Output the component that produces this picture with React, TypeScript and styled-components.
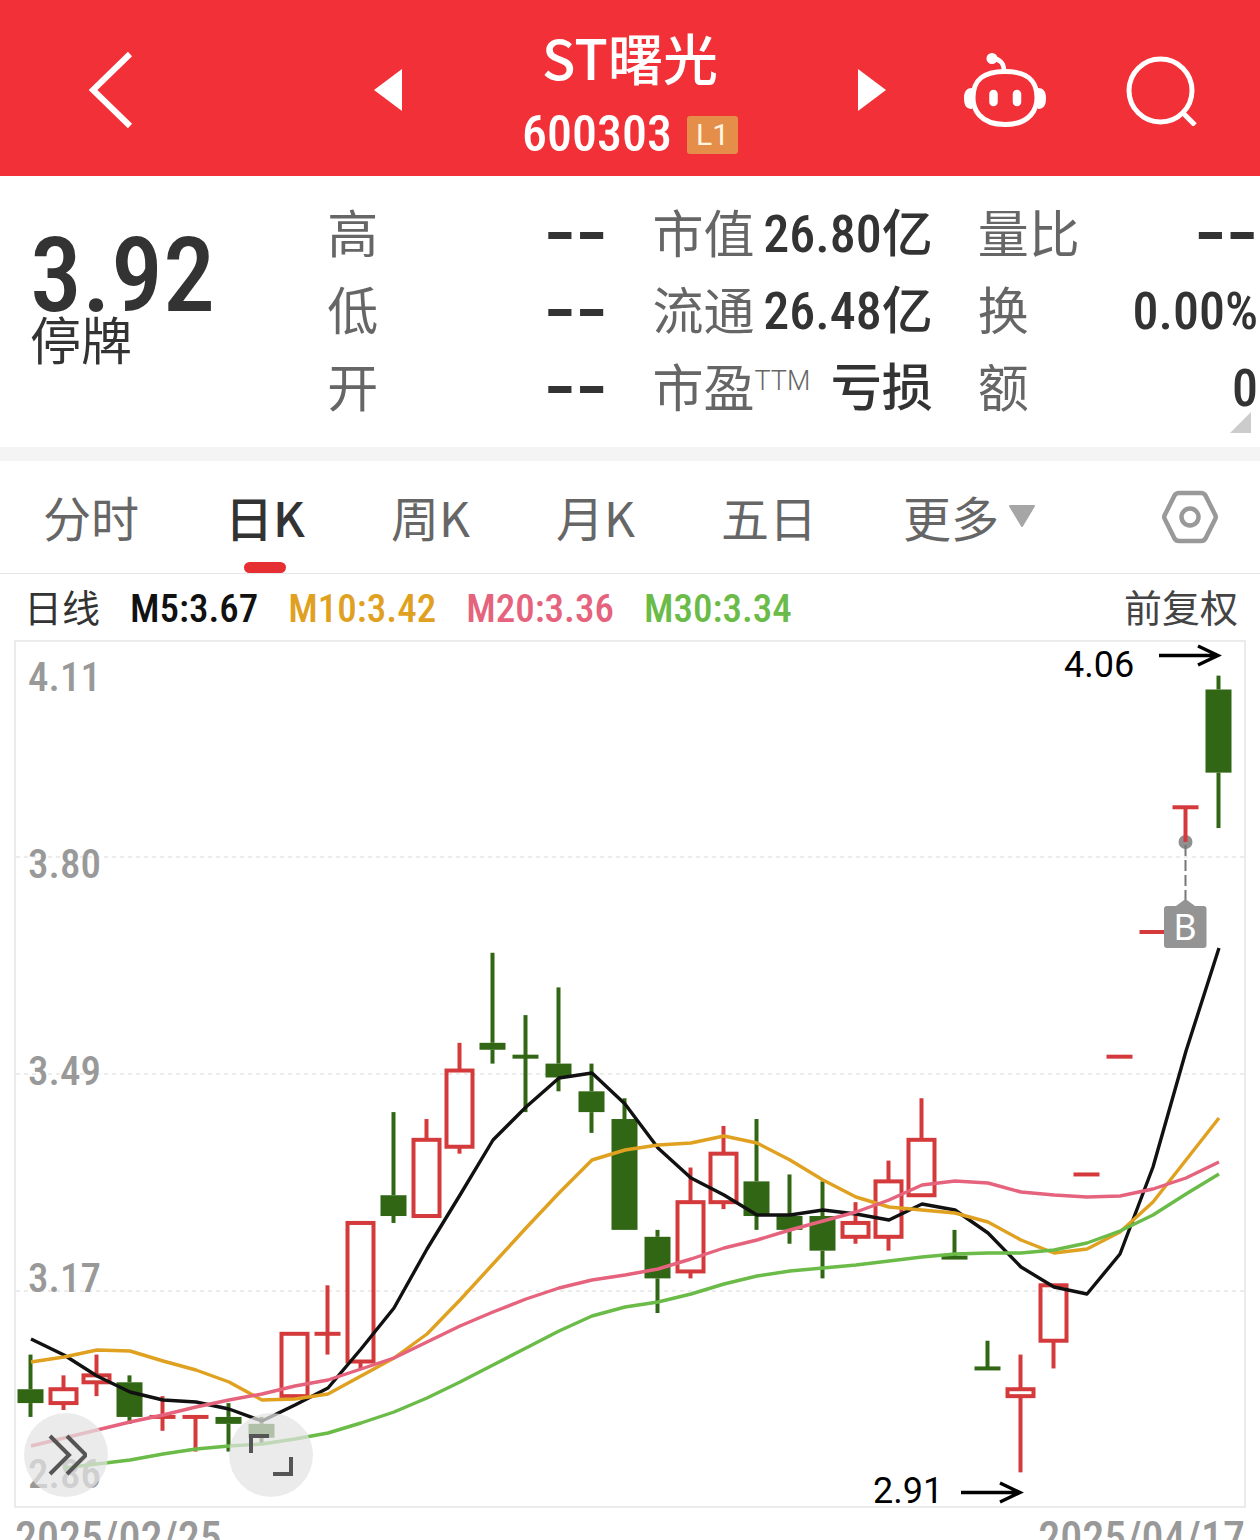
import React from "react";
import styled, { createGlobalStyle } from "styled-components";

const sans = `Roboto, "Noto Sans CJK SC", sans-serif`;
const digits = `"Roboto Condensed", Roboto, "Noto Sans CJK SC", sans-serif`;

const GlobalStyle = createGlobalStyle`
  *, *::before, *::after { box-sizing: border-box; }
  body {
    margin: 0;
    background: #fff;
    color: #333;
    font-family: ${sans};
  }
  button {
    margin: 0;
    padding: 0;
    border: 0;
    background: none;
    color: inherit;
    font: inherit;
    cursor: pointer;
  }
  svg { display: block; }
`;

const Screen = styled.main`
  height: 100vh;
  overflow: hidden;
`;

/* ---------- header ---------- */

const Header = styled.header`
  display: grid;
  grid-template-columns: minmax(0, 1fr) minmax(0, 512px) minmax(0, 1fr);
  align-items: center;
  height: 176px;
  padding-top: 4px;
  background: #f13037;
  color: #fff;
`;

const HeaderSide = styled.div<{ $end?: boolean }>`
  display: flex;
  align-items: center;
  justify-content: ${(p) => (p.$end ? "flex-end" : "flex-start")};
  gap: 80px;
  padding: ${(p) => (p.$end ? "0 62px 0 0" : "0 0 0 88px")};
`;

const Switcher = styled.div`
  display: flex;
  align-items: center;
  justify-content: space-between;
`;

const TitleBlock = styled.div`
  display: flex;
  flex-direction: column;
  align-items: center;
  padding-top: 16px;
`;

const StockName = styled.h1`
  margin: 0;
  font-family: "Noto Sans CJK SC", sans-serif;
  font-size: 55px;
  font-weight: 500;
  line-height: 73px;
`;

const CodeLine = styled.div`
  display: flex;
  align-items: center;
  gap: 15px;
  font-family: ${digits};
  font-size: 50px;
  font-weight: 500;
  line-height: 83px;
`;

const Level = styled.span`
  padding: 0 9px;
  border-radius: 3px;
  background: #e48e4a;
  color: #fff6e0;
  font-family: ${sans};
  font-size: 30px;
  font-weight: 400;
  line-height: 38px;
`;

/* ---------- quote ---------- */

const Quote = styled.section`
  position: relative;
  display: grid;
  grid-template-columns: minmax(0, 9fr) repeat(3, minmax(0, 10fr));
  column-gap: 45px;
  padding: 21px 2px 19px 30px;
  border-bottom: 14px solid #f4f4f4;
`;

const PriceBlock = styled.div`
  display: flex;
  flex-direction: column;
  padding-top: 37px;
`;

const Price = styled.strong`
  font-family: ${digits};
  font-size: 104px;
  font-weight: 500;
  line-height: 84px;
`;

const Status = styled.span`
  font-size: 51px;
  line-height: 50px;
`;

const Facts = styled.dl`
  margin: 0;
`;

const Fact = styled.div`
  display: flex;
  justify-content: space-between;
  height: 77px;
  line-height: 77px;
  font-size: 51px;
  white-space: nowrap;
`;

const FactName = styled.dt`
  display: flex;
  color: #666;
`;

const Ttm = styled.small`
  font-size: 27px;
  font-weight: 300;
  line-height: 60px;
`;

const FactValue = styled.dd<{ $empty?: boolean }>`
  margin: 0;
  font-family: ${(p) => (p.$empty ? `"DejaVu Sans", sans-serif` : digits)};
  font-size: ${(p) => (p.$empty ? "88px" : "52px")};
  font-weight: ${(p) => (p.$empty ? 400 : 500)};
  line-height: ${(p) => (p.$empty ? "64px" : "76px")};
`;

const Unit = styled.span`
  font-family: ${sans};
  font-size: 51px;
`;

const ExpandCorner = styled.button`
  position: absolute;
  right: 9px;
  bottom: 14px;
`;

/* ---------- tabs ---------- */

const Tabs = styled.nav`
  display: flex;
  align-items: stretch;
  gap: 86px;
  height: 113px;
  padding: 0 42px 0 43px;
  border-bottom: 1px solid #e6e6e6;
`;

const Tab = styled.button<{ $active?: boolean }>`
  position: relative;
  display: flex;
  align-items: center;
  gap: 10px;
  padding-bottom: 3px;
  color: ${(p) => (p.$active ? "#333" : "#666")};
  font-family: "Noto Sans CJK SC", sans-serif;
  font-size: 48px;
  font-weight: ${(p) => (p.$active ? 500 : 400)};
  white-space: nowrap;

  &::after {
    content: "";
    display: ${(p) => (p.$active ? "block" : "none")};
    position: absolute;
    bottom: 0;
    left: 50%;
    width: 42px;
    height: 11px;
    margin-left: -21px;
    border-radius: 6px;
    background: #e52f33;
  }
`;

const Settings = styled.button`
  margin-left: auto;
`;

/* ---------- chart ---------- */

const Legend = styled.div`
  display: flex;
  align-items: center;
  gap: 30px;
  height: 66px;
  padding: 4px 22px 0 24px;
  font-size: 38px;
  line-height: 50px;
`;

const Average = styled.span<{ $color: string }>`
  color: ${(p) => p.$color};
  font-family: ${digits};
  font-size: 39px;
  font-weight: 500;
`;

const Adjust = styled.button`
  margin-left: auto;
  color: #444;
`;

const ChartBox = styled.div`
  position: relative;
`;

const ChartSvg = styled.svg`
  width: 100%;
  height: auto;
`;

const AxisText = styled.text`
  fill: #999;
  font-family: ${digits};
  font-size: 41px;
  font-weight: 500;
`;

const PeakText = styled.text`
  fill: #000;
  font-family: ${sans};
  font-size: 36px;
`;

const MarkerText = styled.text`
  fill: #fff;
  font-family: "Noto Sans", sans-serif;
  font-size: 36px;
  text-anchor: middle;
`;

const RoundButton = styled.button<{ $left: number }>`
  position: absolute;
  left: ${(p) => p.$left}px;
  bottom: 11px;
  display: grid;
  place-items: center;
  width: 84px;
  height: 84px;
  border-radius: 50%;
  background: rgba(227, 227, 227, 0.72);
`;

const Dates = styled.div`
  display: flex;
  justify-content: space-between;
  padding: 0 15px;
  color: #999;
  font-family: ${digits};
  font-size: 44px;
  font-weight: 500;
  line-height: 60px;
`;

type Candle = [high: number, open: number, close: number, low: number];

const RED = "#d43a3b";
const GREEN = "#306614";

const candles: Candle[] = [
  [3.08, 3.03, 3.01, 2.99],
  [3.05, 3.01, 3.03, 3.0],
  [3.08, 3.04, 3.05, 3.02],
  [3.05, 3.04, 2.99, 2.98],
  [3.02, 2.99, 2.99, 2.97],
  [2.99, 2.99, 2.99, 2.94],
  [3.01, 2.99, 2.98, 2.94],
  [2.99, 2.98, 2.96, 2.95],
  [3.11, 3.02, 3.11, 3.02],
  [3.18, 3.11, 3.11, 3.08],
  [3.27, 3.07, 3.27, 3.06],
  [3.43, 3.31, 3.28, 3.27],
  [3.42, 3.28, 3.39, 3.28],
  [3.53, 3.38, 3.49, 3.37],
  [3.66, 3.53, 3.52, 3.5],
  [3.57, 3.51, 3.51, 3.43],
  [3.61, 3.5, 3.48, 3.46],
  [3.5, 3.46, 3.43, 3.4],
  [3.45, 3.42, 3.26, 3.26],
  [3.26, 3.25, 3.19, 3.14],
  [3.35, 3.2, 3.3, 3.19],
  [3.41, 3.3, 3.37, 3.29],
  [3.42, 3.33, 3.28, 3.26],
  [3.34, 3.28, 3.26, 3.24],
  [3.33, 3.28, 3.23, 3.19],
  [3.3, 3.25, 3.27, 3.24],
  [3.36, 3.25, 3.33, 3.23],
  [3.45, 3.31, 3.39, 3.31],
  [3.26, 3.22, 3.22, 3.22],
  [3.1, 3.06, 3.06, 3.06],
  [3.08, 3.02, 3.03, 2.91],
  [3.18, 3.1, 3.18, 3.06],
  [3.34, 3.34, 3.34, 3.34],
  [3.51, 3.51, 3.51, 3.51],
  [3.69, 3.69, 3.69, 3.69],
  [3.87, 3.87, 3.87, 3.82],
  [4.06, 4.04, 3.92, 3.84],
];

const averages = [
  {
    label: "M5:3.67",
    color: "#111111",
    first: 0,
    ys: [1339, 1355, 1376, 1392, 1400, 1402, 1409, 1421, 1405, 1388, 1349, 1308, 1249, 1195, 1140, 1107, 1078, 1073, 1104, 1148, 1178, 1195, 1215, 1215, 1210, 1214, 1220, 1204, 1210, 1233, 1267, 1287, 1294, 1254, 1167, 1051, 948],
  },
  {
    label: "M10:3.42",
    color: "#dfa11f",
    first: 0,
    ys: [1362, 1357, 1350, 1351, 1361, 1370, 1382, 1400, 1399, 1394, 1376, 1358, 1334, 1300, 1264, 1228, 1193, 1160, 1150, 1145, 1143, 1136, 1143, 1160, 1180, 1197, 1207, 1210, 1213, 1222, 1240, 1253, 1249, 1232, 1202, 1160, 1118],
  },
  {
    label: "M20:3.36",
    color: "#e5637c",
    first: 0,
    ys: [1446, 1438, 1430, 1422, 1415, 1407, 1400, 1394, 1386, 1380, 1369, 1358, 1342, 1326, 1312, 1299, 1288, 1280, 1275, 1269, 1259, 1248, 1240, 1230, 1221, 1212, 1200, 1185, 1181, 1183, 1192, 1195, 1197, 1196, 1189, 1178, 1162],
  },
  {
    label: "M30:3.34",
    color: "#6abb48",
    first: 1,
    ys: [1468, 1464, 1460, 1454, 1449, 1446, 1444, 1439, 1433, 1423, 1412, 1398, 1382, 1365, 1348, 1331, 1316, 1307, 1302, 1294, 1284, 1276, 1271, 1268, 1265, 1261, 1257, 1254, 1253, 1253, 1250, 1243, 1231, 1215, 1194, 1174],
  },
];

const axis = [
  { label: "4.11", y: 691 },
  { label: "3.80", y: 878 },
  { label: "3.49", y: 1085 },
  { label: "3.17", y: 1292 },
  { label: "2.86", y: 1488 },
];

const priceY = (price: number) => 641 + (4.11 - price) * 692.8;
const candleX = (index: number) => 30.5 + 33 * index;

function CandleMark({ index, data }: { index: number; data: Candle }) {
  const [high, open, close, low] = data;
  const x = candleX(index);
  const previous = index > 0 ? candles[index - 1][2] : close + 1;
  const flat = open === close;
  const rising = close > open || (flat && close >= previous);
  const color = rising ? RED : GREEN;
  const top = priceY(Math.max(open, close));
  const bottom = priceY(Math.min(open, close));
  return (
    <g stroke={color} strokeWidth={4} fill="none">
      {high > Math.max(open, close) && <path d={`M${x} ${priceY(high)}V${top}`} />}
      {low < Math.min(open, close) && <path d={`M${x} ${bottom}V${priceY(low)}`} />}
      {flat && <path d={`M${x - 13} ${top}H${x + 13}`} />}
      {!flat && rising && <rect x={x - 13} y={top} width={26} height={bottom - top} />}
      {!flat && !rising && (
        <rect x={x - 13} y={top} width={26} height={bottom - top} fill={color} stroke="none" />
      )}
    </g>
  );
}

function KLineChart() {
  return (
    <ChartSvg viewBox="0 640 1260 868" role="img" aria-label="日K">
      <rect x={15} y={641} width={1230} height={866} fill="none" stroke="#ebebeb" strokeWidth={2} />
      {[857, 1074, 1291].map((y) => (
        <path key={y} d={`M16 ${y}H1244`} stroke="#e6e6e6" strokeWidth={1.5} strokeDasharray="4 4" />
      ))}
      {axis.map((a) => (
        <AxisText key={a.label} x={28} y={a.y}>
          {a.label}
        </AxisText>
      ))}
      <circle cx={1185.5} cy={842} r={7} fill="#8f8f8f" />
      {candles.map((c, i) => (
        <CandleMark key={i} index={i} data={c} />
      ))}
      {averages.map((a) => (
        <polyline
          key={a.label}
          points={a.ys.map((y, i) => `${31 + 33 * (i + a.first)},${y}`).join(" ")}
          fill="none"
          stroke={a.color}
          strokeWidth={3.4}
          strokeLinejoin="round"
        />
      ))}
      <path d="M1185.500 845V900" stroke="#777" strokeWidth={2} strokeDasharray="11 4" />
      <path
        d="M1167 906H1176L1185.500 899L1195 906H1203.500a3 3 0 0 1 3 3V945a3 3 0 0 1-3 3H1167a3 3 0 0 1-3-3V909a3 3 0 0 1 3-3Z"
        fill="#949494"
      />
      <MarkerText x={1185} y={940}>
        B
      </MarkerText>
      <PeakText x={1064} y={677}>
        4.06
      </PeakText>
      <PeakText x={873} y={1503}>
        2.91
      </PeakText>
      <g fill="none" stroke="#000" strokeWidth={3.4}>
        <path d="M1159 655.500H1218M1198 646L1218 655.500L1198 665" />
        <path d="M961 1492.500H1020M1000 1483L1020 1492.500L1000 1502" />
      </g>
    </ChartSvg>
  );
}

function Triangle({ flip }: { flip?: boolean }) {
  return (
    <svg width="28" height="42" viewBox="0 0 28 42" fill="#fff">
      <path d={flip ? "M0 0L28 21L0 42Z" : "M28 0L0 21L28 42Z"} />
    </svg>
  );
}

function RobotIcon() {
  return (
    <svg width="82" height="76" viewBox="0 0 82 76" fill="none" stroke="#fff" strokeWidth="5">
      <circle cx="28" cy="6.500" r="5.500" fill="#fff" stroke="none" />
      <path d="M28 6C36 7 40 11 40 19" strokeWidth="4.500" />
      <path d="M41 19.500C62 19.500 73 27 73 46C73 56 67 72.500 41 72.500C15 72.500 9 56 9 46C9 27 20 19.500 41 19.500Z" />
      <path
        d="M8 36C3 36 0 39 0 46C0 53 2 57 8 57ZM74 36C79 36 82 39 82 46C82 53 80 57 74 57Z"
        fill="#fff"
        stroke="none"
      />
      <path d="M29.500 42V50M53 42V50" strokeWidth="8.500" strokeLinecap="round" />
    </svg>
  );
}

const factColumns = [
  [
    { name: "高", value: "--" },
    { name: "低", value: "--" },
    { name: "开", value: "--" },
  ],
  [
    { name: "市值", value: "26.80", unit: "亿" },
    { name: "流通", value: "26.48", unit: "亿" },
    { name: "市盈", note: "TTM", value: "", unit: "亏损" },
  ],
  [
    { name: "量比", value: "--" },
    { name: "换", value: "0.00%" },
    { name: "额", value: "0" },
  ],
] as { name: string; note?: string; value: string; unit?: string }[][];

const tabs = ["分时", "日K", "周K", "月K", "五日"];

export default function App() {
  return (
    <Screen>
      <GlobalStyle />
      <Header>
        <HeaderSide>
          <button aria-label="返回">
            <svg width="46" height="78" viewBox="0 0 46 78" fill="none" stroke="#fff" strokeWidth="6">
              <path d="M42 3L5 39L42 75" />
            </svg>
          </button>
        </HeaderSide>
        <Switcher>
          <button aria-label="上一只">
            <Triangle />
          </button>
          <TitleBlock>
            <StockName>ST曙光</StockName>
            <CodeLine>
              600303<Level>L1</Level>
            </CodeLine>
          </TitleBlock>
          <button aria-label="下一只">
            <Triangle flip />
          </button>
        </Switcher>
        <HeaderSide $end>
          <button aria-label="助手">
            <RobotIcon />
          </button>
          <button aria-label="搜索">
            <svg width="72" height="72" viewBox="0 0 72 72" fill="none" stroke="#fff" strokeWidth="5">
              <circle cx="34.500" cy="36.500" r="31.500" />
              <path d="M57 59L69 71" />
            </svg>
          </button>
        </HeaderSide>
      </Header>

      <Quote>
        <PriceBlock>
          <Price>3.92</Price>
          <Status>停牌</Status>
        </PriceBlock>
        {factColumns.map((column) => (
          <Facts key={column[0].name}>
            {column.map((f) => (
              <Fact key={f.name}>
                <FactName>
                  {f.name}
                  {f.note && <Ttm>{f.note}</Ttm>}
                </FactName>
                <FactValue $empty={f.value === "--"}>
                  {f.value}
                  {f.unit && <Unit>{f.unit}</Unit>}
                </FactValue>
              </Fact>
            ))}
          </Facts>
        ))}
        <ExpandCorner aria-label="展开">
          <svg width="21" height="21" viewBox="0 0 21 21" fill="#ccc">
            <path d="M21 0V21H0Z" />
          </svg>
        </ExpandCorner>
      </Quote>

      <Tabs>
        {tabs.map((t) => (
          <Tab key={t} $active={t === "日K"}>
            {t}
          </Tab>
        ))}
        <Tab>
          更多
          <svg width="26" height="22" viewBox="0 0 26 22" fill="#a6a6a6" stroke="#a6a6a6" strokeWidth="2" strokeLinejoin="round">
            <path d="M1 1H25L13 21Z" />
          </svg>
        </Tab>
        <Settings aria-label="设置">
          <svg width="56" height="54" viewBox="0 0 56 54" fill="none" stroke="#999" strokeWidth="4.500" strokeLinejoin="round">
            <path d="M17 3H39Q42 3 43.500 5.500L53 24.500Q54.500 27 53 29.500L43.500 48.500Q42 51 39 51H17Q14 51 12.500 48.500L3 29.500Q1.500 27 3 24.500L12.500 5.500Q14 3 17 3Z" />
            <circle cx="28" cy="27" r="8.500" />
          </svg>
        </Settings>
      </Tabs>

      <Legend>
        <span>日线</span>
        {averages.map((a) => (
          <Average key={a.label} $color={a.color}>
            {a.label}
          </Average>
        ))}
        <Adjust>前复权</Adjust>
      </Legend>

      <ChartBox>
        <KLineChart />
        <RoundButton $left={24} aria-label="快进">
          <svg width="42" height="42" viewBox="0 0 42 42" fill="none" stroke="#555" strokeWidth="4">
            <path d="M5 2L24 21L5 40M22 2L41 21L22 40" />
          </svg>
        </RoundButton>
        <RoundButton $left={229} aria-label="全屏">
          <svg width="44" height="44" viewBox="0 0 44 44" fill="none" stroke="#555" strokeWidth="4">
            <path d="M2 20V3H20M42 24V41H24" />
          </svg>
        </RoundButton>
      </ChartBox>

      <Dates>
        <time dateTime="2025-02-25">2025/02/25</time>
        <time dateTime="2025-04-17">2025/04/17</time>
      </Dates>
    </Screen>
  );
}
